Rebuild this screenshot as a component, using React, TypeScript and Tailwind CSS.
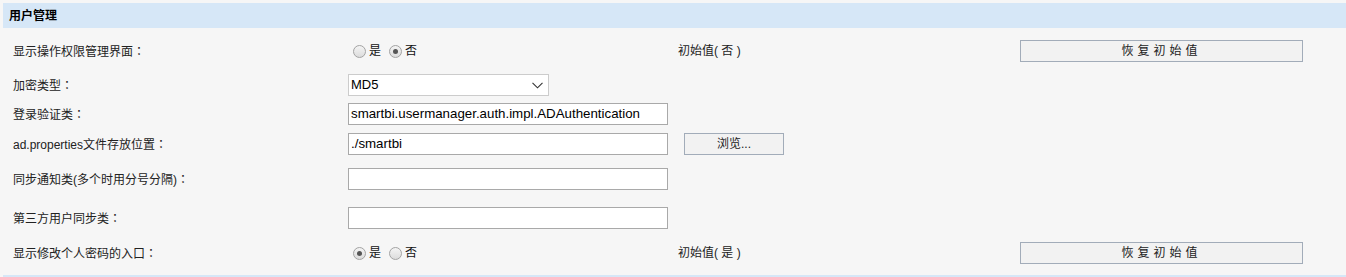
import React from "react";

const FONT = "font-['Liberation_Sans','Noto_Sans_CJK_SC',sans-serif]";

function Radio({ checked }: { checked: boolean }) {
  return (
    <span className="flex h-[13px] w-[13px] items-center justify-center rounded-full border border-[#a3a3a3] bg-[linear-gradient(#f4f4f4,#dcdcdc)]">
      {checked && <span className="h-[5px] w-[5px] rounded-full bg-[#555]" />}
    </span>
  );
}

function YesNo({ value }: { value: boolean }) {
  return (
    <div className="flex items-center pl-[5px] text-[12px] text-[#111]">
      <Radio checked={value} />
      <span className="ml-[3px] mr-[8px]">是</span>
      <Radio checked={!value} />
      <span className="ml-[3px]">否</span>
    </div>
  );
}

function TextBox({ value = "" }: { value?: string }) {
  return (
    <div className="flex h-[22px] w-[320px] items-center border border-[#a9a9a9] bg-white px-[2px] text-[13.3px] text-black">
      {value}
    </div>
  );
}

function Btn({ children, className }: { children: React.ReactNode; className: string }) {
  return (
    <div
      className={`flex h-[22px] items-center justify-center border border-[#a2acb9] bg-[#f2f2f2] text-[12px] text-[#222] ${className}`}
    >
      {children}
    </div>
  );
}

function Row({
  label,
  className,
  children,
  third,
  fourth,
}: {
  label: string;
  className: string;
  children?: React.ReactNode;
  third?: React.ReactNode;
  fourth?: React.ReactNode;
}) {
  return (
    <div className={`grid grid-cols-[335px_330px_342px_283px] items-center ${className}`}>
      <div className="text-[12px] text-[#222]">
        {label}
        {/* centred full-width colon, as in the original */}
        <span className="font-['Noto_Sans_CJK_TC',sans-serif]">：</span>
      </div>
      <div>{children}</div>
      <div className="text-[12px] text-[#222]">{third}</div>
      <div>{fourth}</div>
    </div>
  );
}

export default function App() {
  return (
    <div className={`h-[277px] w-[1346px] overflow-hidden bg-[#f6f6f6] pt-[3px] pl-[3px] ${FONT}`}>
      <div className="flex h-[25px] items-center bg-[#d6e7f7] pl-[6px] text-[12px] font-bold text-black">
        用户管理
      </div>

      <div className="pl-[10px]">
        <Row
          label="显示操作权限管理界面"
          className="mt-[8px] h-[30px]"
          third="初始值( 否 )"
          fourth={<Btn className="w-[283px] tracking-[4px]">恢复初始值</Btn>}
        >
          <YesNo value={false} />
        </Row>

        <Row label="加密类型" className="mt-[8px] h-[22px]">
          <div className="flex h-[22px] w-[201px] items-center justify-between border border-[#cccccc] bg-white pl-[2px] pr-[5px] text-[13px] text-black">
            <span>MD5</span>
            <svg width="11" height="7" viewBox="0 0 11 7" fill="none" stroke="#333" strokeWidth="1.1">
              <path d="M0.5 0.8 L5.5 5.8 L10.5 0.8" />
            </svg>
          </div>
        </Row>

        <Row label="登录验证类" className="mt-[7px] h-[22px]">
          <TextBox value="smartbi.usermanager.auth.impl.ADAuthentication" />
        </Row>

        <Row
          label="ad.properties文件存放位置"
          className="mt-[8px] h-[22px]"
          third={
            <div className="ml-[6px]">
              <Btn className="w-[100px]">浏览...</Btn>
            </div>
          }
        >
          <TextBox value="./smartbi" />
        </Row>

        <Row label="同步通知类(多个时用分号分隔)" className="mt-[13px] h-[22px]">
          <TextBox />
        </Row>

        <Row label="第三方用户同步类" className="mt-[17px] h-[22px]">
          <TextBox />
        </Row>

        <Row
          label="显示修改个人密码的入口"
          className="mt-[13px] h-[22px]"
          third="初始值( 是 )"
          fourth={<Btn className="w-[283px] tracking-[4px]">恢复初始值</Btn>}
        >
          <YesNo value={true} />
        </Row>
      </div>

      <div className="mt-[11px] h-[2px] bg-[#d6e7f7]" />
    </div>
  );
}
